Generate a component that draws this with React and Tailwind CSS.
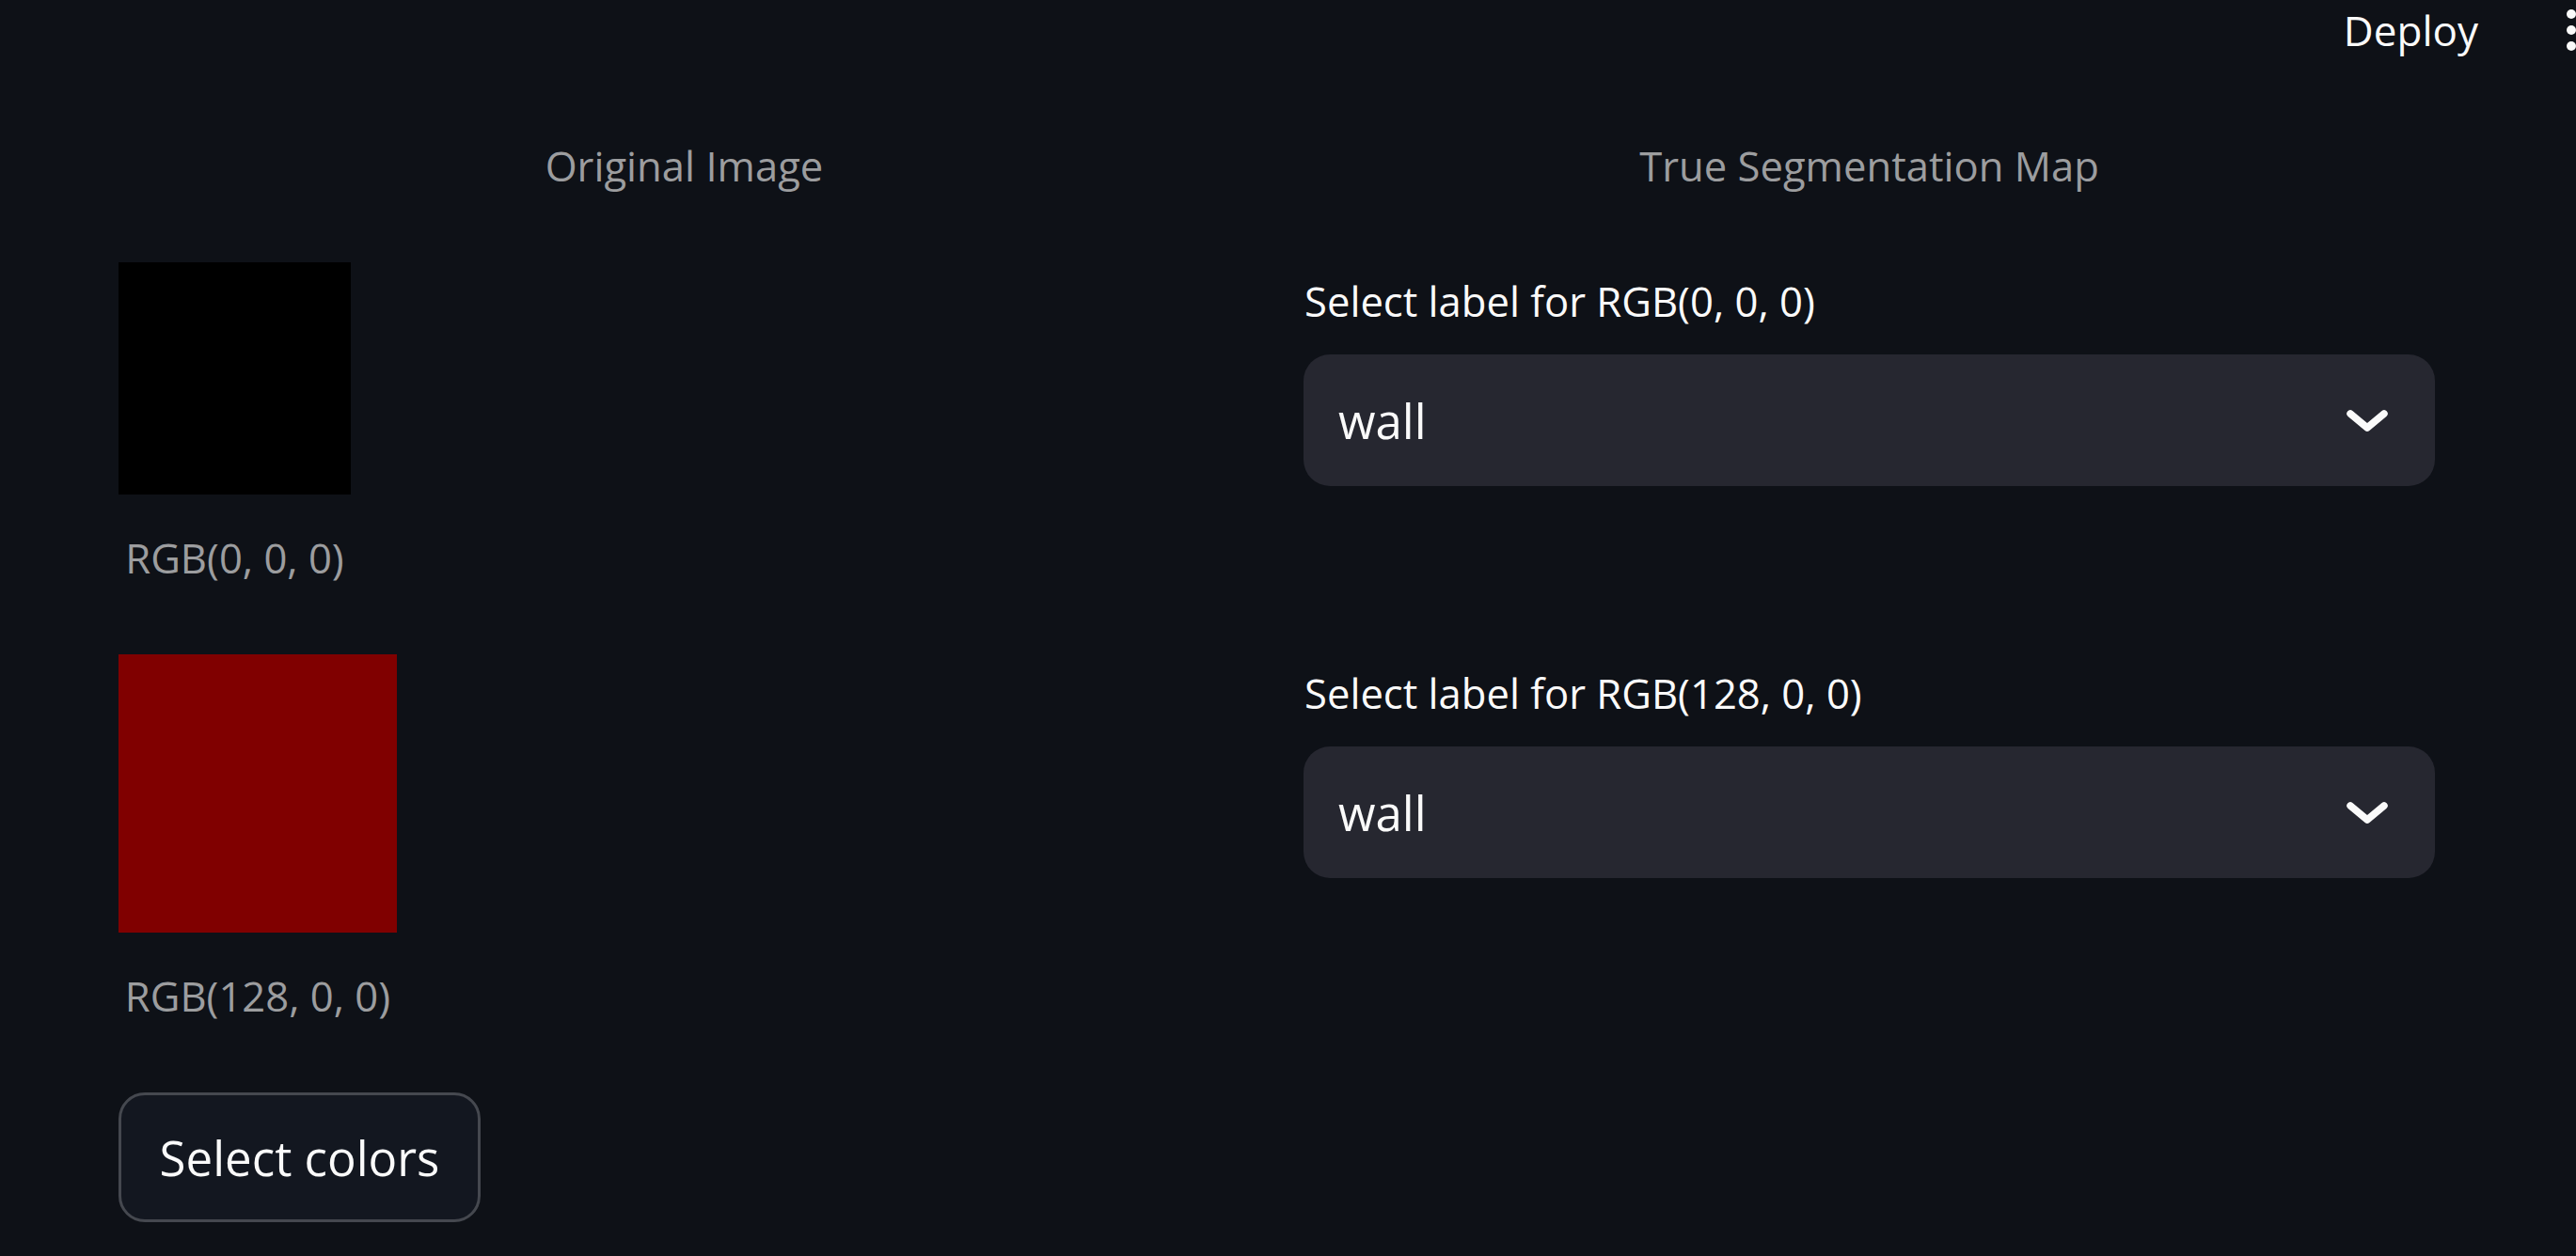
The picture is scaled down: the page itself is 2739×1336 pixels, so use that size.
export default function App() {
  const font = { fontFamily: '"Open Sans", "Noto Sans", sans-serif' };
  const Chevron = () => (
    <svg width="48" height="48" viewBox="0 0 48 48" className="shrink-0">
      <path d="M6 17 L24 32 L42 17" fill="none" stroke="#fafafa" strokeWidth="7.5" strokeLinecap="round" strokeLinejoin="round" />
    </svg>
  );
  const Swatch = ({ size, color, label }) => (
    <div className="flex flex-col items-center w-fit">
      <div className={size} style={{ background: color }} />
      <div className="mt-[32px] text-[43.6px] leading-[70px] text-[#9c9d9f]">{label}</div>
    </div>
  );
  const Select = ({ label }) => (
    <div className="flex flex-col pt-[6px]">
      <div className="text-[43.6px] leading-[70px] text-[#fafafa] pl-[1px]">{label}</div>
      <div className="mt-[22px] h-[140px] rounded-[28px] bg-[#262730] flex items-center justify-between pl-[37px] pr-[48px]">
        <span className="text-[51px] leading-[60px] text-[#fafafa]">wall</span>
        <Chevron />
      </div>
    </div>
  );
  return (
    <div className="w-full h-[1336px] bg-[#0e1117] overflow-hidden" style={font}>
      <div className="h-[141px] flex justify-end items-start">
        <span className="mt-[2px] text-[44px] leading-[60px] text-[#fafafa]">Deploy</span>
        <div className="ml-[94px] w-[10px] flex flex-col gap-[7px] mt-[10px]">
          <div className="w-[10px] h-[10px] rounded-full bg-[#fafafa]" />
          <div className="w-[10px] h-[10px] rounded-full bg-[#fafafa]" />
          <div className="w-[10px] h-[10px] rounded-full bg-[#fafafa]" />
        </div>
      </div>
      <div className="pl-[126px] pr-[150px] flex flex-col gap-[68px]">
        <div className="grid grid-cols-2 gap-[57px]">
          <div className="text-center text-[43.6px] leading-[70px] text-[#9c9d9f]">Original Image</div>
          <div className="text-center text-[43.6px] leading-[70px] text-[#9c9d9f]">True Segmentation Map</div>
        </div>
        <div className="grid grid-cols-2 gap-[57px] items-start">
          <Swatch size="w-[247px] h-[247px]" color="#000000" label="RGB(0, 0, 0)" />
          <Select label="Select label for RGB(0, 0, 0)" />
        </div>
        <div className="grid grid-cols-2 gap-[57px] items-start">
          <Swatch size="w-[296px] h-[296px]" color="#800000" label="RGB(128, 0, 0)" />
          <Select label="Select label for RGB(128, 0, 0)" />
        </div>
        <div>
          <button className="w-[385px] h-[138px] rounded-[28px] border-[3px] border-[#45484f] bg-[#131720] text-[51px] leading-[60px] text-[#fafafa] flex items-center justify-center">
            Select colors
          </button>
        </div>
      </div>
    </div>
  );
}
